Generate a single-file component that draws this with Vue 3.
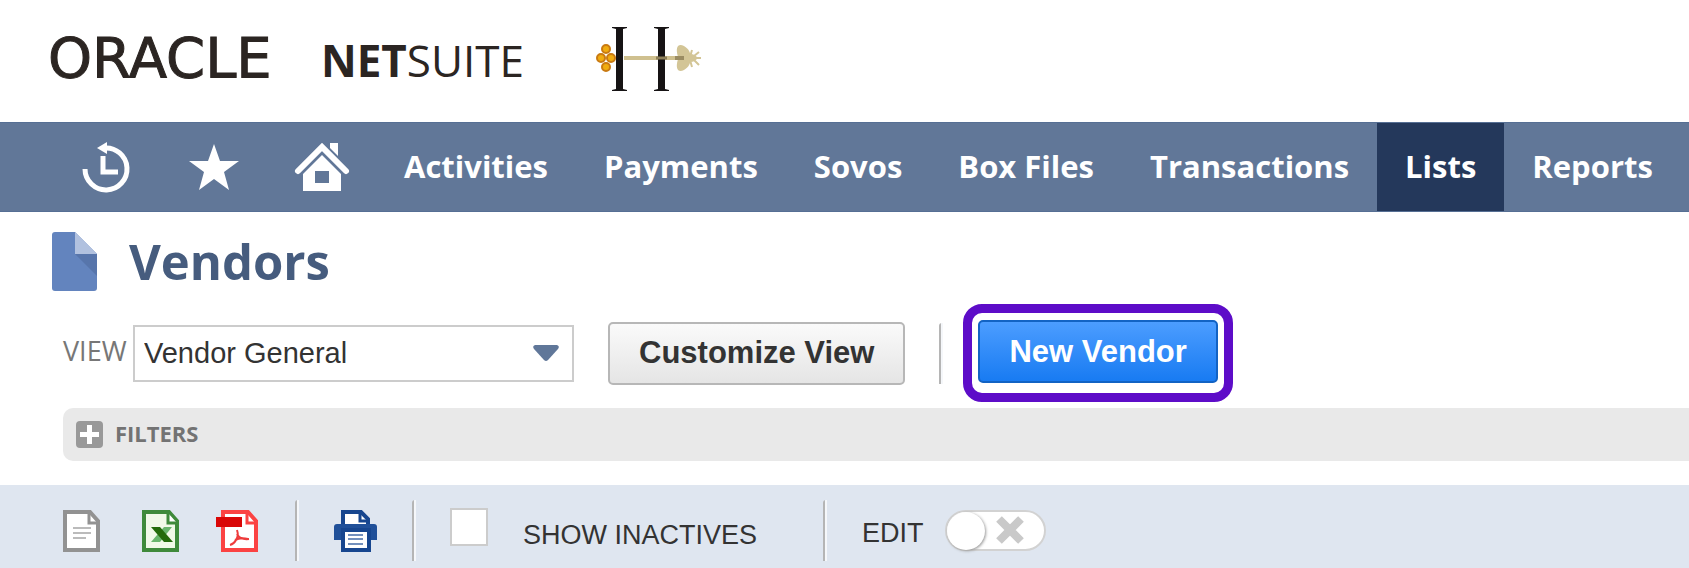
<script setup>
import { ref } from 'vue';

const tabs = [
  { id: 'activities', label: 'Activities' },
  { id: 'payments', label: 'Payments' },
  { id: 'sovos', label: 'Sovos' },
  { id: 'box-files', label: 'Box Files' },
  { id: 'transactions', label: 'Transactions' },
  { id: 'lists', label: 'Lists' },
  { id: 'reports', label: 'Reports' },
];

const activeTab = ref('lists');
const view = ref('general');
const filtersOpen = ref(false);
const showInactives = ref(false);
const editMode = ref(false);
</script>

<template>
  <div class="page">
    <header class="header">
      <a href="#" class="brand">
        <span class="brand-oracle">ORACLE</span>
        <span class="brand-netsuite"><b>NET</b>SUITE</span>
      </a>
      <svg class="company-logo" viewBox="0 0 106 66" width="106" height="66" aria-hidden="true">
        <path d="M28 32H85" stroke="#cfc08f" stroke-width="4" />
        <g fill="#161314">
          <path d="M16 1h15v1l-4 1v60l4 1v1H16v-1l4-1V3l-4-1z" />
          <path d="M58 1h15v1l-4 1v60l4 1v1H58v-1l4-1V3l-4-1z" />
        </g>
        <path d="M60 32h11" stroke="#8d7f58" stroke-width="3" />
        <g fill="#f0ac10" stroke="#c97a12" stroke-width="2">
          <circle cx="10" cy="23" r="4" />
          <circle cx="5" cy="32" r="4" />
          <circle cx="15" cy="32" r="4" />
          <circle cx="10" cy="41" r="4" />
        </g>
        <g fill="#d3c596">
          <path d="M82 31C79 21 82 17 88 20c5 3 7 7 6 12z" />
          <path d="M82 33c-3 10 0 14 6 11 5-3 7-7 6-12z" />
          <ellipse cx="94" cy="32" rx="7" ry="4" />
          <path
            d="M94 31l2-7M98 30l5-4M94 34l2 7M98 34l5 5M99 32h6"
            stroke="#d3c596"
            stroke-width="2"
          />
        </g>
        <path d="M79 32h9" stroke="#9b8c62" stroke-width="4" />
      </svg>
    </header>

    <nav class="nav">
      <a href="#" class="nav-icon" aria-label="Recent records">
        <svg viewBox="0 0 48 50" width="48" height="50">
          <path
            d="M3 27A21 21 0 1 0 22 6"
            fill="none"
            stroke="#fff"
            stroke-width="5"
          />
          <path d="M15 6L25 0v12z" fill="#fff" />
          <path d="M21 14v16h15" fill="none" stroke="#fff" stroke-width="5" />
        </svg>
      </a>
      <a href="#" class="nav-icon" aria-label="Shortcuts">
        <svg viewBox="0 0 50 46" width="50" height="46">
          <path d="M25 0l6 17h19L35 28l5 18-15-11-15 11 5-18L0 17h19z" fill="#fff" />
        </svg>
      </a>
      <a href="#" class="nav-icon" aria-label="Home">
        <svg viewBox="0 0 54 48" width="54" height="48">
          <path d="M35 0h8v13l-8-8z" fill="#fff" />
          <path
            d="M3 28L27 4l24 24"
            fill="none"
            stroke="#fff"
            stroke-width="6"
            stroke-linecap="round"
          />
          <path d="M27 12L46 31v17H8V31zM20 28v12h14V28z" fill="#fff" fill-rule="evenodd" />
        </svg>
      </a>
      <a
        v-for="tab in tabs"
        :key="tab.id"
        href="#"
        class="nav-tab"
        :class="{ active: activeTab === tab.id }"
        @click.prevent="activeTab = tab.id"
      >
        {{ tab.label }}
      </a>
    </nav>

    <main>
      <div class="title-row">
        <svg viewBox="0 0 45 59" width="45" height="59" aria-hidden="true">
          <path d="M3 0h20l22 22v34q0 3-3 3H3q-3 0-3-3V3q0-3 3-3z" fill="#6384be" />
          <path d="M23 22h22v22z" fill="#5775ab" />
          <path d="M23 0l22 22H23z" fill="#b1c1df" />
        </svg>
        <h1>Vendors</h1>
      </div>

      <div class="controls">
        <label for="view-select" class="view-label">VIEW</label>
        <div class="select-wrap">
          <select id="view-select" v-model="view">
            <option value="general">Vendor General</option>
          </select>
          <svg class="select-arrow" viewBox="0 0 26 16" width="26" height="16" aria-hidden="true">
            <path d="M2 0h22q3 1 1 4L15 15q-2 2-4 0L1 4Q-1 1 2 0z" fill="#607799" />
          </svg>
        </div>
        <button type="button" class="btn">Customize View</button>
        <span class="divider"></span>
        <div class="callout">
          <button type="button" class="btn btn-primary">New Vendor</button>
        </div>
      </div>

      <button
        type="button"
        class="filters"
        :aria-expanded="filtersOpen"
        @click="filtersOpen = !filtersOpen"
      >
        <svg viewBox="0 0 27 27" width="27" height="27" aria-hidden="true">
          <rect width="27" height="27" rx="4" fill="#999" />
          <path d="M13.500 4v19M4 13.500h19" stroke="#fff" stroke-width="5" />
        </svg>
        <span>FILTERS</span>
      </button>

      <div class="toolbar">
        <div class="exports">
          <button type="button" class="icon-btn" aria-label="Export CSV">
            <svg viewBox="0 0 38 42" width="38" height="42">
              <path d="M2 2h25l8 9v29H2z" fill="#fff" stroke="#929292" stroke-width="4" />
              <path d="M26 3v10h9" fill="none" stroke="#929292" stroke-width="3" />
              <path d="M10 18h18M10 23h18M10 28h13" stroke="#bbb" stroke-width="2" />
            </svg>
          </button>
          <button type="button" class="icon-btn" aria-label="Export Excel">
            <svg viewBox="0 0 38 42" width="38" height="42">
              <path d="M2 2h25l8 9v29H2z" fill="#f1f9e8" stroke="#3f8a3b" stroke-width="4" />
              <path d="M26 3v10h9" fill="#fff" stroke="#3f8a3b" stroke-width="3" />
              <path d="M22 17h8l-12 15H9z" fill="#69b56c" />
              <path d="M9 17h9l13 15h-9z" fill="#246b0b" />
            </svg>
          </button>
          <button type="button" class="icon-btn" aria-label="Export PDF">
            <svg viewBox="0 0 38 42" width="38" height="42">
              <path d="M2 2h25l8 9v29H2z" fill="#fff" stroke="#fb4343" stroke-width="4" />
              <path d="M26 3v10h9" fill="none" stroke="#fb4343" stroke-width="3" />
              <path d="M-5 7h26v10H-5z" fill="#d90707" />
              <path
                d="M16 20q2 6-1 10-2 4-6 5M16 24q3 6 12 5M14 30q6-3 13-1"
                fill="none"
                stroke="#ee3c3c"
                stroke-width="2"
              />
            </svg>
          </button>
        </div>
        <span class="divider"></span>
        <button type="button" class="icon-btn print" aria-label="Print">
          <svg viewBox="0 0 43 42" width="43" height="42">
            <path d="M9 16V2h18l7 7v7" fill="#fff" stroke="#17468f" stroke-width="4" />
            <path d="M26 3v8h8" fill="none" stroke="#17468f" stroke-width="3" />
            <path d="M3 14h37q3 0 3 3v13H0V17q0-3 3-3z" fill="#205099" />
            <path d="M9 20h26v20H9z" fill="#fff" stroke="#17468f" stroke-width="4" />
            <path d="M14 25h15M14 29h15M14 34h15" stroke="#7390bd" stroke-width="2" />
          </svg>
        </button>
        <span class="divider"></span>
        <label class="inactives">
          <input v-model="showInactives" type="checkbox" />
          <span>SHOW INACTIVES</span>
        </label>
        <span class="divider"></span>
        <label class="edit">
          <span class="edit-text">EDIT</span>
          <span class="switch">
            <input v-model="editMode" type="checkbox" role="switch" />
            <svg viewBox="0 0 28 28" width="28" height="28" aria-hidden="true">
              <path d="M3 3l22 22M25 3L3 25" stroke="#c9c9c9" stroke-width="8" />
            </svg>
          </span>
        </label>
      </div>
    </main>
  </div>
</template>

<style>
body {
  margin: 0;
  background-color: #fff;
}
</style>

<style scoped>
.page {
  overflow-x: hidden;
  font-family: 'Liberation Sans', Arial, sans-serif;
  color: #333;
}

.page *,
.page *::before {
  box-sizing: border-box;
}

svg {
  display: block;
  flex: none;
  overflow: visible;
}

.header {
  display: flex;
  align-items: center;
  height: 122px;
  padding: 0 48px 4px;
}

.brand {
  display: flex;
  align-items: baseline;
  justify-content: space-between;
  width: 476px;
  margin-right: 72px;
  color: #2b2522;
  text-decoration: none;
  white-space: nowrap;
}

.brand-oracle {
  font-family: 'DejaVu Sans', sans-serif;
  font-size: 56px;
  line-height: 60px;
  -webkit-text-stroke: 1px #2b2522;
}

.brand-netsuite {
  font-family: 'Open Sans', sans-serif;
  font-size: 44px;
  font-weight: 400;
  line-height: 60px;
}

.brand-netsuite b {
  font-weight: 700;
}

.nav {
  display: flex;
  height: 90px;
  padding-left: 52px;
  background-color: #617798;
  border-top: 1px solid #566f94;
  border-bottom: 1px solid #566f94;
}

.nav-icon {
  display: flex;
  align-items: center;
  justify-content: center;
  flex: none;
  width: 108px;
}

.nav-tab {
  display: flex;
  align-items: center;
  flex: none;
  padding: 0 28px 3px;
  font-family: 'Open Sans', sans-serif;
  font-size: 31px;
  font-weight: 700;
  color: #fff;
  text-decoration: none;
  white-space: nowrap;
}

.nav-tab.active {
  background-color: #24385b;
}

.title-row {
  display: flex;
  align-items: center;
  gap: 32px;
  padding: 20px 52px 13px;
}

.title-row h1 {
  margin: 0;
  font-family: 'Open Sans', sans-serif;
  font-size: 49px;
  font-weight: 700;
  line-height: 59px;
  color: #465c7e;
}

.controls {
  display: flex;
  align-items: center;
  padding-left: 63px;
}

.view-label {
  width: 70px;
  padding-bottom: 5px;
  font-family: 'Open Sans', sans-serif;
  font-size: 27px;
  font-weight: 400;
  color: #777;
}

.select-wrap {
  position: relative;
  width: 441px;
  margin-right: 34px;
}

.select-wrap select {
  display: block;
  width: 100%;
  height: 57px;
  padding: 0 48px 0 9px;
  appearance: none;
  background-color: #fff;
  border: 2px solid #ccc;
  border-radius: 0;
  font-family: inherit;
  font-size: 29px;
  color: #333;
}

.select-arrow {
  position: absolute;
  top: 20px;
  right: 15px;
  pointer-events: none;
}

.btn {
  height: 63px;
  padding: 0 29px;
  background: linear-gradient(#fafafa, #e5e5e5);
  border: 2px solid #b7b7b7;
  border-radius: 5px;
  font-family: inherit;
  font-size: 31px;
  font-weight: 700;
  color: #333;
  white-space: nowrap;
  cursor: pointer;
}

.btn-primary {
  display: block;
  background: linear-gradient(#4c9dff, #187bf2);
  border-color: #1263c4;
  color: #fff;
}

.divider {
  flex: none;
  width: 4px;
  height: 61px;
  border-left: 2px solid #b5b5b5;
  border-right: 2px solid #f5f7fa;
  border-radius: 3px 0 0 0;
}

.controls .divider {
  margin: 0 20px 0 34px;
}

.callout {
  padding: 7px 6px 10px;
  border: 9px solid #5d0cc8;
  border-radius: 19px;
}

.filters {
  display: flex;
  align-items: center;
  gap: 12px;
  width: calc(100% - 63px);
  height: 53px;
  margin: 6px 0 24px 63px;
  padding: 0 13px;
  background-color: #e9e9e9;
  border: none;
  border-radius: 10px 0 0 10px;
  font-family: 'Open Sans', sans-serif;
  font-size: 22px;
  font-weight: 700;
  color: #737373;
  cursor: pointer;
}

.filters span {
  padding-bottom: 4px;
}

.toolbar {
  display: flex;
  align-items: center;
  height: 83px;
  padding: 8px 0 0 63px;
  background-color: #dfe6f0;
  font-size: 27px;
}

.toolbar > * {
  flex: none;
}

.exports {
  display: flex;
  gap: 41px;
  margin-right: 36px;
}

.icon-btn {
  padding: 0;
  background: none;
  border: none;
  cursor: pointer;
}

.print {
  margin: 0 35px;
}

.inactives {
  display: flex;
  align-items: center;
  gap: 35px;
  margin: 0 66px 0 34px;
}

.inactives input {
  width: 38px;
  height: 38px;
  margin: 0 0 8px;
  appearance: none;
  background-color: #fff;
  border: 2px solid #ccc;
}

.inactives input:checked {
  background-color: #607799;
}

.inactives span {
  padding-top: 10px;
}

.edit {
  display: flex;
  align-items: center;
  gap: 21px;
  margin-left: 35px;
}

.edit-text {
  padding-top: 6px;
}

.switch {
  position: relative;
}

.switch input {
  display: block;
  width: 101px;
  height: 41px;
  margin: 0;
  appearance: none;
  background-color: #fff;
  border: 2px solid #d2d2d2;
  border-radius: 21px;
}

.switch input::before {
  content: '';
  display: block;
  width: 38px;
  height: 38px;
  border-radius: 50%;
  background-color: #fff;
  box-shadow: 1px 1px 3px #999;
}

.switch input:checked::before {
  margin-left: auto;
}

.switch svg {
  position: absolute;
  top: 6px;
  right: 22px;
  pointer-events: none;
}
</style>
